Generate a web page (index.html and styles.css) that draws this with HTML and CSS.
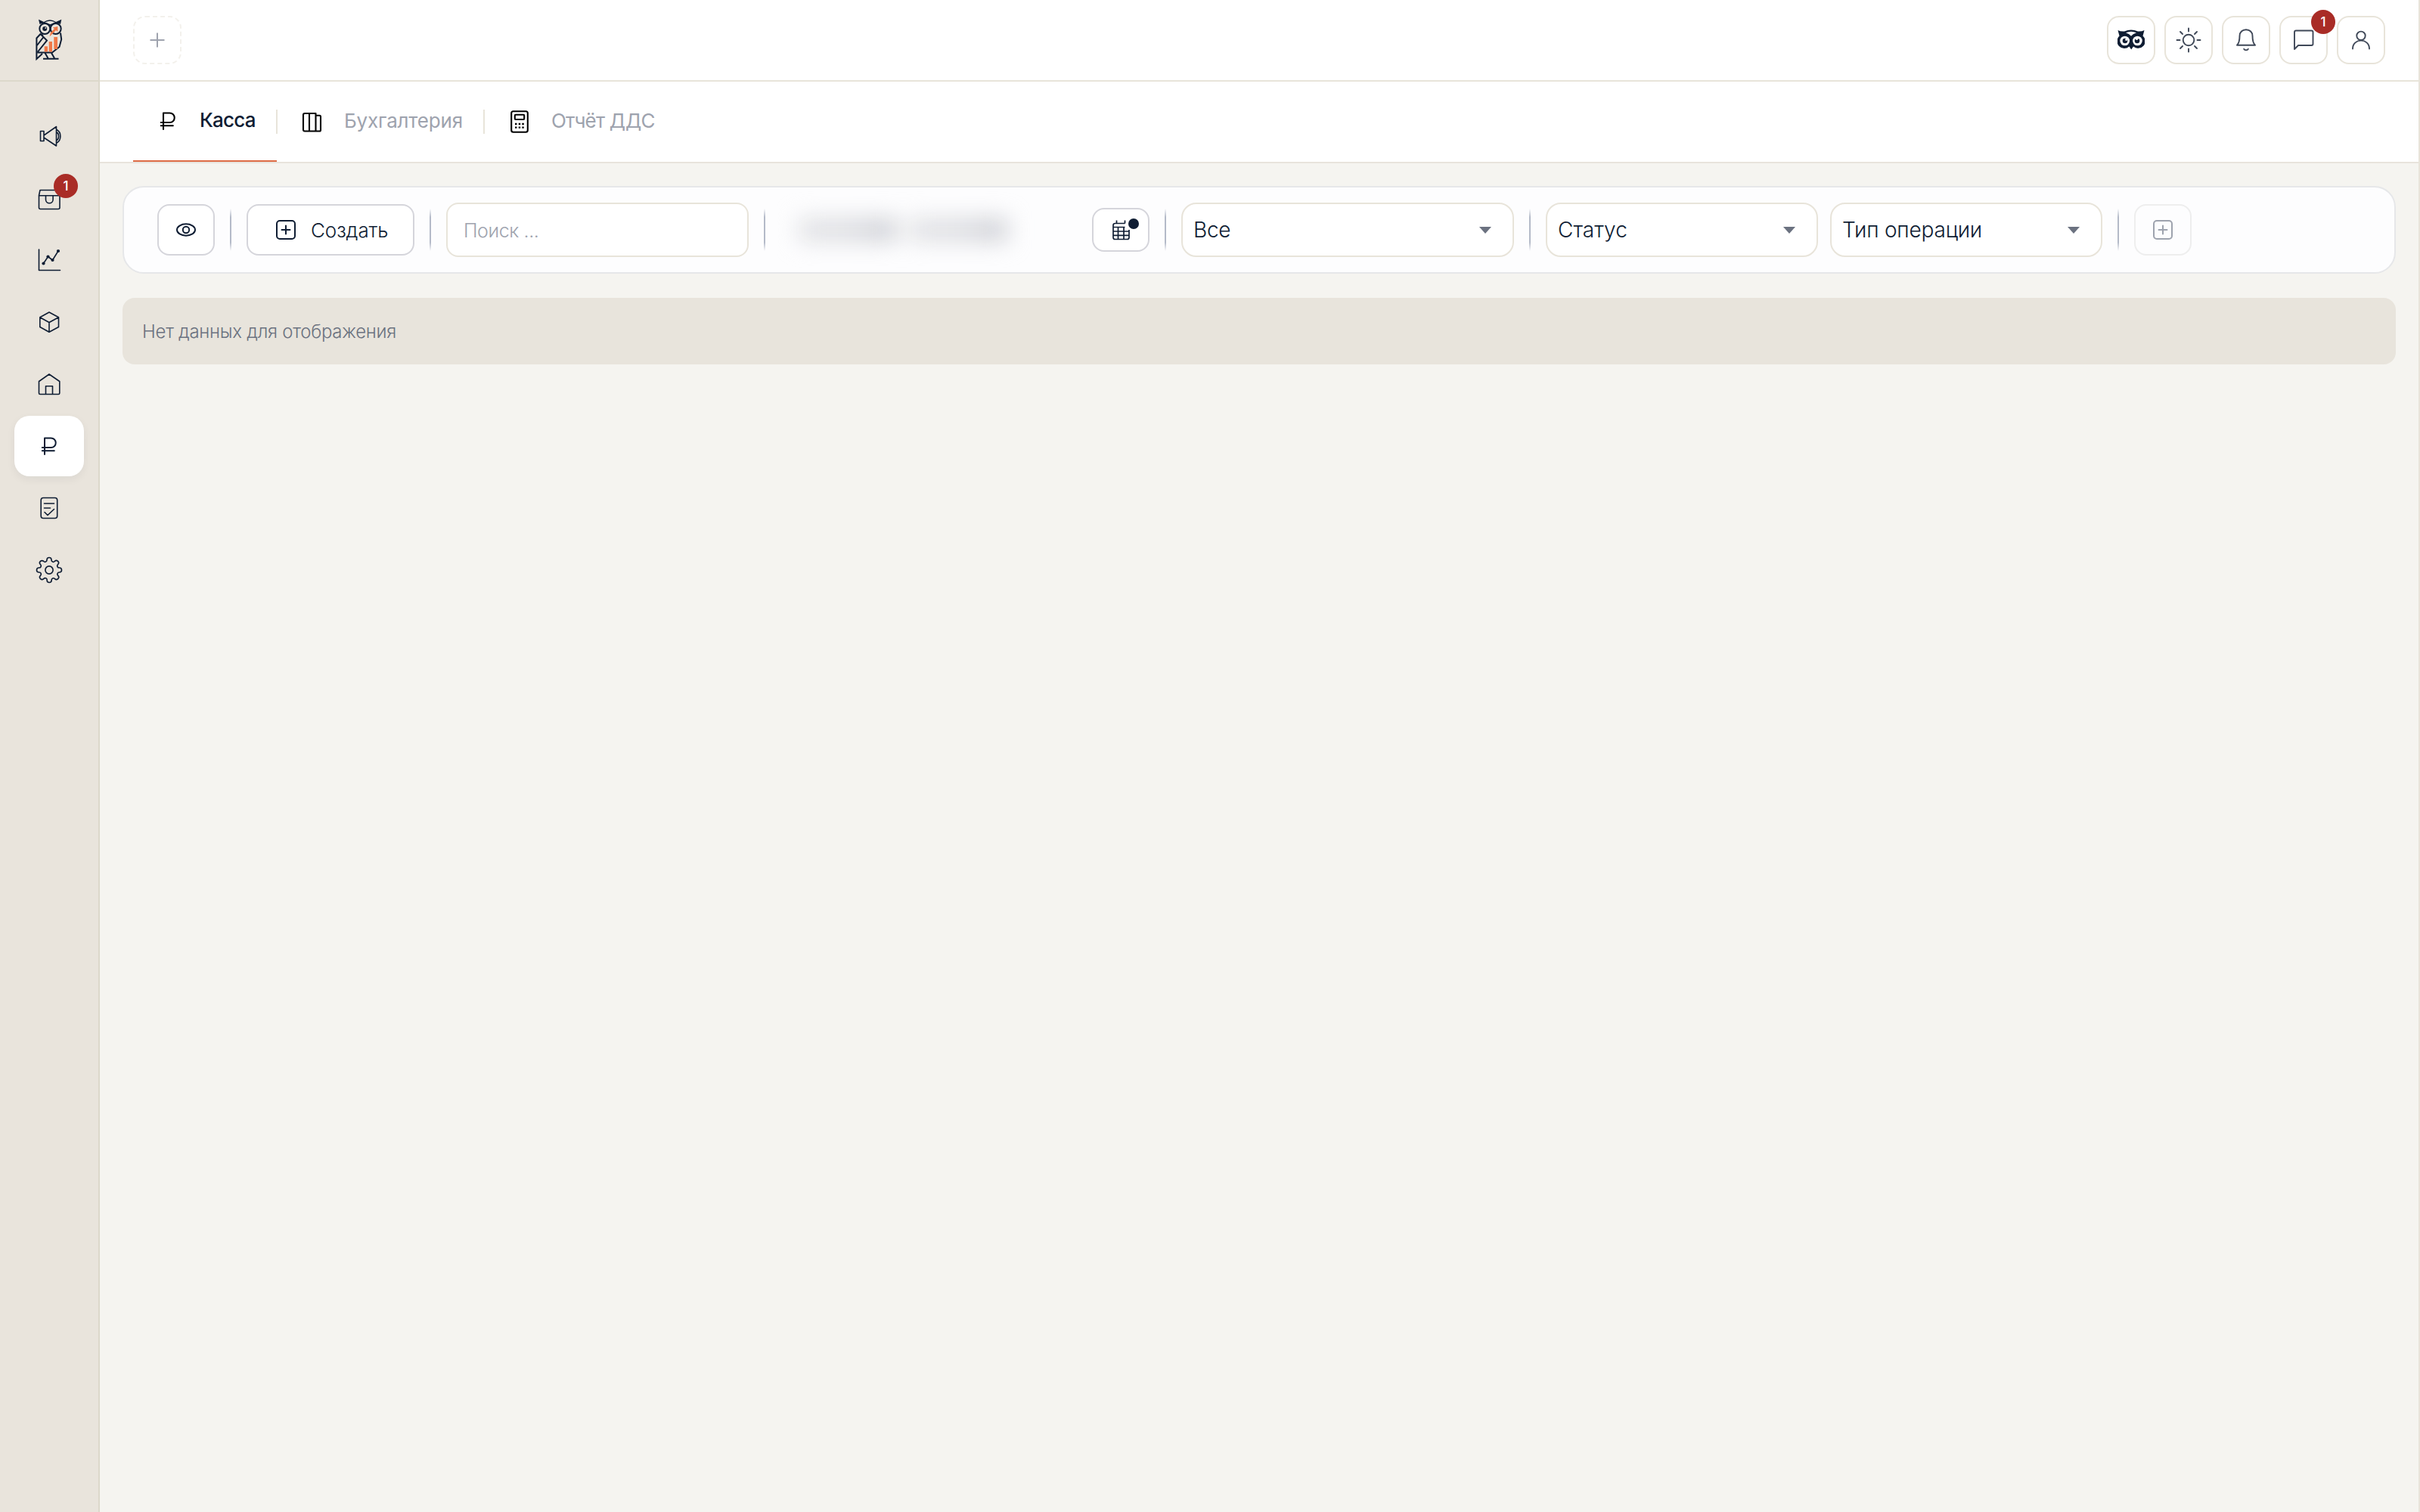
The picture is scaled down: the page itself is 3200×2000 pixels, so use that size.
FILE: index.html
```html
<!DOCTYPE html>
<html lang="ru">
<head>
    <meta charset="UTF-8">
    <meta name="viewport" content="width=device-width, initial-scale=1.0">
    <title>Касса</title>
    <link rel="stylesheet" href="styles.css">
</head>
<body>
    <div class="app">
        <aside class="sidebar">
            <a class="logo" href="#">
                <svg width="36" height="56" viewBox="0 0 36 56" fill="none" stroke="#0f1d33" stroke-width="2">
                    <path d="M4 .8L11 4Q19-1.500 27 4L34.300.8L33 7Q26 3.500 19.500 9.500Q13 3.500 5.500 7Z" fill="#0f1d33" stroke="none"/>
                    <path d="M12.500 4.600Q19 .8 25.800 4.600L19.500 7.200Z" fill="#e8e4dd" stroke="none"/>
                    <circle cx="12.300" cy="13" r="7"/>
                    <circle cx="26.700" cy="13" r="7"/>
                    <circle cx="12.200" cy="13" r="3" fill="#0f1d33" stroke="none"/>
                    <circle cx="13.200" cy="12" r=".9" fill="#e8e4dd" stroke="none"/>
                    <path d="M33 18.500L34.200 27L31.500 37L22 44.500H2.500M6.500 20L1.400 25.500V53L9 46M6.500 20L15 28.500L3 43.500M10.500 24L2 35M6 19.500L10 22"/>
                    <path d="M12.500 45L16.500 52M21 45L25 52M10 52.700H30.500"/>
                    <g fill="#f07848" stroke="none">
                        <rect x="11.700" y="36.300" width="4.300" height="7.200"/>
                        <rect x="17.700" y="30" width="4.300" height="13.500"/>
                        <rect x="24.300" y="24" width="4.700" height="16"/>
                        <path d="M18.500 23.500L20 18L25 13L22.800 11.500L29.300 10V17L27 15Z"/>
                    </g>
                </svg>
            </a>
            <nav class="side-nav">
                <a class="side-item" href="#">
                    <svg class="icon" viewBox="0 0 36 36">
                        <path d="M6.500 11.500h4.500v13H6.500zM11 17L27.500 5.500v25.500L11 20zM28 9.500c6.500 3.500 6.500 14 0 17.500M28 13c3.500 2 3.500 8.500 0 10.500"/>
                    </svg>
                </a>
                <a class="side-item" href="#">
                    <svg class="icon" viewBox="0 0 36 36">
                        <path d="M4.500 14.500L6 7.500h25l1 7v16q0 2-2 2H6.500q-2 0-2-2zM4.500 14.700H32M13.500 15v5a4.800 4.800 0 0 0 9.600 0v-5"/>
                    </svg>
                    <span class="badge">1</span>
                </a>
                <a class="side-item" href="#">
                    <svg class="icon" viewBox="0 0 36 36">
                        <path d="M4.500 4v27.500H32.500M10.500 22.500L16.500 13.500L22.500 18L30 6"/>
                        <g class="dots"><circle cx="10.500" cy="22.500" r="2.100"/><circle cx="16.500" cy="13.500" r="2.100"/><circle cx="22.500" cy="18" r="2.100"/><circle cx="30" cy="6" r="2.100"/></g>
                    </svg>
                </a>
                <a class="side-item" href="#">
                    <svg class="icon" viewBox="0 0 36 36">
                        <path d="M18 5L30.500 11.800V24.500L18 31.300L5.800 24.500V11.800zM5.800 11.800L18 18.500L30.500 11.800M18 18.500V31"/>
                    </svg>
                </a>
                <a class="side-item" href="#">
                    <svg class="icon" viewBox="0 0 36 36">
                        <path d="M18 5L31.800 14.500V30q0 1.500-1.500 1.500H6q-1.500 0-1.500-1.500V14.500zM13.500 31.500V20.800h9V31.500"/>
                    </svg>
                </a>
                <a class="side-item active" href="#">
                    <svg class="icon bold" viewBox="0 0 36 36">
                        <path d="M12 29V7.500h8.500a6.200 6.200 0 0 1 0 12.500H8.800M8.800 24.200h16"/>
                    </svg>
                </a>
                <a class="side-item" href="#">
                    <svg class="icon" viewBox="0 0 36 36">
                        <rect x="7.200" y="4.500" width="21.500" height="27" rx="3"/>
                        <path d="M11.500 12h13M11.500 18h8M12 23.500l4 4L24.500 19.500"/>
                    </svg>
                </a>
                <a class="side-item" href="#">
                    <svg class="icon gear" viewBox="0 0 24 24">
                        <path d="M19.400 15a1.650 1.650 0 0 0 .33 1.820l.06.06a2 2 0 0 1-2.830 2.830l-.06-.06a1.650 1.650 0 0 0-2.800 1.170V21a2 2 0 0 1-4 0v-.09a1.650 1.650 0 0 0-2.890-1.260l-.06.06a2 2 0 0 1-2.830-2.830l.06-.06A1.650 1.650 0 0 0 3.090 14H3a2 2 0 0 1 0-4h.09a1.650 1.650 0 0 0 1.260-2.820l-.06-.06a2 2 0 0 1 2.830-2.830l.06.06A1.650 1.650 0 0 0 10 3.090V3a2 2 0 0 1 4 0v.09a1.650 1.650 0 0 0 2.820 1.260l.06-.06a2 2 0 0 1 2.830 2.830l-.06.06A1.650 1.650 0 0 0 20.910 10H21a2 2 0 0 1 0 4h-.09a1.650 1.650 0 0 0-1.510 1z"/>
                        <circle cx="12" cy="12" r="3.400"/>
                    </svg>
                </a>
            </nav>
        </aside>

        <main class="main">
            <header class="header">
                <button class="square-btn add-tab">
                    <svg width="24" height="24" viewBox="0 0 24 24"><path d="M12 2.500v19M2.500 12h19"/></svg>
                </button>
                <div class="header-actions">
                    <button class="square-btn">
                        <svg class="owl" width="36" height="28" viewBox="0 0 36 28">
                            <path fill="#0f1d33" d="M.5 1Q4 2.800 9 2.500Q18-1.500 27 2.500Q32 2.800 35.500 1L33.500 8.500A9 9 0 0 1 21 22.500L18.200 26.500L15.500 22.500A9 9 0 0 1 2.500 8.500Z"/>
                            <path fill="#fff" d="M11 4.300Q18 1.300 25 4.300Q20 6 18 8.800Q16 6 11 4.300Z"/>
                            <circle cx="9.700" cy="15" r="6.300" fill="#fff"/>
                            <circle cx="26.400" cy="15" r="6.300" fill="#fff"/>
                            <circle cx="10" cy="15" r="3.300" fill="#0f1d33"/>
                            <circle cx="26" cy="15" r="3.300" fill="#0f1d33"/>
                            <circle cx="11.600" cy="13.500" r="1.400" fill="#fff"/>
                            <circle cx="25.500" cy="12.300" r="1.800" fill="#fff"/>
                        </svg>
                    </button>
                    <button class="square-btn">
                        <svg class="icon" viewBox="0 0 36 36">
                            <circle cx="18" cy="18" r="7.300"/>
                            <path d="M18 2.500v4M18 29.500v4M2.500 18h4M29.500 18h4M7 7l3 3M26 26l3 3M7 29l3-3M26 10l3-3"/>
                        </svg>
                    </button>
                    <button class="square-btn">
                        <svg class="icon" viewBox="0 0 36 36">
                            <path d="M6 24.800C8.500 22.500 9.500 19 9.500 12.500C9.500 7.500 13 4.200 18 4.200S26.500 7.500 26.500 12.500C26.500 19 27.500 22.500 30 24.800zM15.200 29.800c1 2 4.600 2 5.600 0"/>
                        </svg>
                    </button>
                    <button class="square-btn">
                        <svg class="icon" viewBox="0 0 36 36">
                            <path d="M6 30V7.500q0-2 2-2H28.500q2 0 2 2V23q0 2-2 2H11z"/>
                        </svg>
                        <span class="badge">1</span>
                    </button>
                    <button class="square-btn">
                        <svg class="icon" viewBox="0 0 36 36">
                            <circle cx="18" cy="12.300" r="5.700"/>
                            <path d="M7 29.500c0-14.500 22-14.500 22 0"/>
                        </svg>
                    </button>
                </div>
            </header>

            <nav class="tabs">
                <a class="tab active" href="#">
                    <svg class="icon" viewBox="0 0 36 36">
                        <path d="M12 29V7.500h8.500a6.200 6.200 0 0 1 0 12.500H8.800M8.800 24.200h16"/>
                    </svg>
                    <span class="tab-cash">Касса</span>
                </a>
                <a class="tab" href="#">
                    <svg class="icon" viewBox="0 0 36 36">
                        <path d="M6 9q0-2 2-2H22.500V30.500H8q-2 0-2-2zM14 7v23.500M22.500 9.700h5q1.500 0 1.500 1.500v17.800q0 1.500-1.500 1.500h-5"/>
                    </svg>
                    <span class="tab-books">Бухгалтерия</span>
                </a>
                <a class="tab" href="#">
                    <svg class="icon" viewBox="0 0 36 36">
                        <rect x="7.200" y="4.200" width="21.600" height="27.600" rx="2.500"/>
                        <rect x="11.800" y="8.700" width="12.400" height="6.300" rx="1"/>
                        <path class="keys" d="M12 21h2.500M16.700 21h2.500M21.300 21h2.500M12 25.700h2.500M16.700 25.700h2.500M21.300 25.700h2.500"/>
                    </svg>
                    <span class="tab-report">Отчёт ДДС</span>
                </a>
            </nav>

            <section class="content">
                <div class="toolbar">
                    <button class="btn btn-icon">
                        <svg class="icon bold" viewBox="0 0 36 36">
                            <ellipse cx="18" cy="18" rx="12" ry="7.700"/>
                            <circle cx="18" cy="18" r="4.200"/>
                        </svg>
                    </button>
                    <span class="divider"></span>
                    <button class="btn btn-create">
                        <svg class="icon bold" viewBox="0 0 36 36">
                            <rect x="6" y="6" width="24" height="24" rx="4"/>
                            <path d="M18 12.500v11M12.500 18h11"/>
                        </svg>
                        <span>Создать</span>
                    </button>
                    <span class="divider"></span>
                    <input class="search" type="text" placeholder="Поиск ...">
                    <span class="divider"></span>
                    <div class="period">
                        <div class="period-value">
                            <span class="period-part"></span>
                            <span class="period-part"></span>
                        </div>
                        <button class="btn btn-calendar">
                            <svg width="40" height="36" viewBox="0 0 40 36">
                                <path d="M21.500 9.500H8.500q-2.500 0-2.500 2.500v16q0 2.500 2.500 2.500h16q2.500 0 2.500-2.500v-10M6 14.500h15.500M6 20h21M6 25.300h21M12.500 14.500v16M20 14.500v16M10.500 5.500v4M21.500 5.500v4"/>
                                <circle cx="33" cy="10" r="7"/>
                            </svg>
                        </button>
                    </div>
                    <span class="divider"></span>
                    <div class="select select-wide"><span class="select-all">Все</span><i class="arrow"></i></div>
                    <span class="divider"></span>
                    <div class="selects">
                        <div class="select"><span class="select-status">Статус</span><i class="arrow"></i></div>
                        <div class="select"><span class="select-type">Тип операции</span><i class="arrow"></i></div>
                    </div>
                    <span class="divider"></span>
                    <button class="btn btn-icon" disabled>
                        <svg class="icon bold" viewBox="0 0 36 36">
                            <rect x="6" y="6" width="24" height="24" rx="4"/>
                            <path d="M18 12.500v11M12.500 18h11"/>
                        </svg>
                    </button>
                </div>
                <div class="empty"><span>Нет данных для отображения</span></div>
            </section>
        </main>
    </div>
</body>
</html>
```

FILE: styles.css
```css
* {
    box-sizing: border-box;
}
body {
    margin: 0;
    font-family: Inter, "Noto Sans", sans-serif;
    font-weight: 300;
    color: #0f1d33;
    background-color: #f5f4f0;
}
a {
    color: inherit;
    text-decoration: none;
}
button {
    padding: 0;
    font: inherit;
    color: inherit;
    background-color: #ffffff;
    cursor: pointer;
}
svg {
    display: block;
    flex: none;
}
.app {
    display: flex;
    height: 100vh;
    border-right: 2px solid #e8e4da;
    overflow: hidden;
}

/* icons */
.icon {
    width: 36px;
    height: 36px;
    fill: none;
    stroke: currentColor;
    stroke-width: 1.6;
    stroke-linecap: round;
    stroke-linejoin: round;
}
.icon.bold {
    stroke-width: 2;
}
.icon .dots {
    fill: currentColor;
    stroke: none;
}
.icon .keys {
    stroke-linecap: butt;
    stroke-width: 2.3;
}
.badge {
    position: absolute;
    width: 32px;
    height: 32px;
    border-radius: 50%;
    background-color: #a92c26;
    color: #ffffff;
    font-size: 17px;
    font-weight: 500;
    line-height: 32px;
    text-align: center;
}

/* sidebar */
.sidebar {
    flex: none;
    width: 132px;
    border-right: 2px solid #dcd8cb;
    background-color: #e9e4dc;
}
.logo {
    display: flex;
    align-items: center;
    justify-content: center;
    height: 108px;
    border-bottom: 2px solid #dcd8cb;
}
.side-nav {
    display: flex;
    flex-direction: column;
    align-items: center;
    gap: 2px;
    padding-top: 32px;
}
.side-item {
    position: relative;
    display: flex;
    align-items: center;
    justify-content: center;
    width: 92px;
    height: 80px;
    border-radius: 20px;
}
.side-item.active {
    background-color: #ffffff;
    box-shadow: 0 4px 12px rgba(15, 29, 51, 0.06);
}
.side-item .badge {
    top: 8px;
    left: 52px;
}
.icon.gear {
    stroke-width: 1.1;
}

/* header */
.main {
    flex: 1;
    min-width: 0;
}
.header {
    display: flex;
    align-items: center;
    justify-content: space-between;
    height: 108px;
    padding: 0 44px;
    border-bottom: 2px solid #e8e4da;
    background-color: #ffffff;
}
.header-actions {
    display: flex;
    gap: 12px;
}
.square-btn {
    position: relative;
    display: flex;
    align-items: center;
    justify-content: center;
    width: 64px;
    height: 64px;
    border: 2px solid #e8e4da;
    border-radius: 16px;
    color: #3f4858;
}
.square-btn .icon {
    stroke-width: 1.9;
}
.square-btn .badge {
    top: -10px;
    right: -12px;
}
.add-tab {
    border: 2px dashed #f3f1ec;
}
.add-tab svg {
    fill: none;
    stroke: #9fa3ae;
    stroke-width: 2;
}

/* tabs */
.tabs {
    display: flex;
    height: 108px;
    padding: 0 44px;
    border-bottom: 2px solid #e8e3dc;
    background-color: #ffffff;
}
.tab {
    display: flex;
    align-items: center;
    gap: 24px;
    width: 190px;
    padding: 0 28px;
    color: #9ea3ae;
    font-size: 26px;
    font-weight: 400;
    white-space: nowrap;
}
.tab span {
    padding-bottom: 3px;
}
.tab + .tab {
    width: 274px;
    padding: 0;
}
.tab + .tab::before {
    content: "";
    flex: none;
    width: 2px;
    height: 32px;
    margin-right: 4px;
    margin-left: -1px;
    background-color: #e8e4da;
}
.tab .icon {
    color: #000000;
    stroke-width: 2.1;
}
.tab.active {
    border-bottom: 2px solid #de6b45;
    color: #0f1d33;
    font-weight: 500;
}
.tab-cash {
    letter-spacing: -0.8px;
}
.tab-books {
    letter-spacing: -0.2px;
}
.tab-report {
    letter-spacing: -0.8px;
}

/* content */
.content {
    display: flex;
    flex-direction: column;
    gap: 32px;
    padding: 30px;
}
.toolbar {
    display: flex;
    align-items: center;
    gap: 20px;
    height: 116px;
    padding: 0 44px;
    border: 2px solid #e6e7e9;
    border-radius: 28px;
    background-color: #fdfdfe;
}
.divider {
    flex: none;
    width: 2px;
    height: 56px;
    background: linear-gradient(to bottom, transparent, #b4bac8 20%, #b4bac8 80%, transparent);
}
.btn {
    display: flex;
    flex: none;
    align-items: center;
    justify-content: center;
    height: 68px;
    border: 2px solid #d5d5db;
    border-radius: 16px;
    color: #0f1d33;
}
.btn-icon {
    width: 76px;
}
.btn-icon:disabled {
    border-color: #eeeeee;
    background-color: transparent;
    color: #9ea3ae;
}
.btn-create {
    gap: 15px;
    justify-content: flex-start;
    width: 222px;
    padding-left: 32px;
    font-size: 26px;
    letter-spacing: -0.1px;
}
.search {
    width: 400px;
    height: 72px;
    padding: 2px 22px 0 21px;
    border: 2px solid #e8e4da;
    border-radius: 16px;
    outline: none;
    background-color: #ffffff;
    font-family: inherit;
    font-size: 25px;
    font-weight: 300;
    letter-spacing: -0.4px;
}
.search::placeholder {
    color: #9ea3ae;
    opacity: 1;
}
.period {
    display: flex;
    align-items: center;
    width: 488px;
}
.period-value {
    display: flex;
    gap: 16px;
    width: 412px;
    padding-left: 24px;
    filter: blur(15px);
}
.period-part {
    width: 130px;
    height: 30px;
    background: linear-gradient(to right, #e0e1e4, #dcdde1 50%, #caccd2);
}
.btn-calendar {
    width: 76px;
    height: 58px;
}
.btn-calendar svg {
    margin-left: 8px;
}
.btn-calendar path {
    fill: none;
    stroke: #0f1d33;
    stroke-width: 1.7;
}
.btn-calendar circle {
    fill: #0f1d33;
}
.selects {
    display: flex;
    gap: 16px;
}
.select {
    display: flex;
    align-items: center;
    justify-content: space-between;
    width: 360px;
    height: 72px;
    padding: 0 28px 0 14px;
    border: 2px solid #e8e4da;
    border-radius: 20px;
    background-color: #ffffff;
    font-size: 28px;
    white-space: nowrap;
}
.select-wide {
    width: 440px;
}
.select-all {
    letter-spacing: -0.3px;
}
.select-type {
    letter-spacing: -0.2px;
}
.arrow {
    border-top: 9px solid #6b7280;
    border-left: 8px solid transparent;
    border-right: 8px solid transparent;
}
.empty {
    display: flex;
    align-items: center;
    height: 88px;
    padding: 0 26px;
    border-radius: 16px;
    background-color: #e8e4dc;
    color: #6b7280;
    font-size: 24px;
    letter-spacing: -0.27px;
}
```
